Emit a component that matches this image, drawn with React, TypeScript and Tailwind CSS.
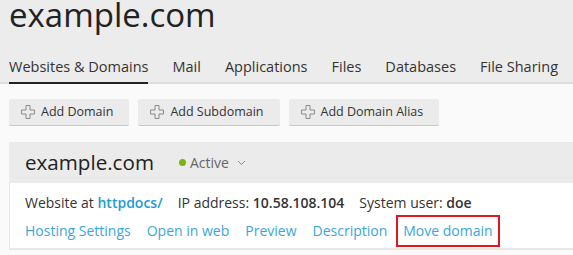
import { useState } from 'react';

const tabs = ['Websites & Domains', 'Mail', 'Applications', 'Files', 'Databases', 'File Sharing'];
const actions = ['Add Domain', 'Add Subdomain', 'Add Domain Alias'];
const links = ['Hosting Settings', 'Open in web', 'Preview', 'Description'];

function PlusIcon() {
  return (
    <svg className="w-[14px] h-[14px] shrink-0" viewBox="0 0 14 14" fill="none" stroke="#8a8a8a" strokeWidth={1}>
      <path d="M5 0.5h4v4.5h4.5v4h-4.5v4.5h-4v-4.5h-4.5v-4h4.5z" />
    </svg>
  );
}

export default function App() {
  const [activeTab] = useState(0);

  return (
    <div className="w-[573px] h-[255px] overflow-hidden bg-[#fafafa] font-['Open_Sans',sans-serif] text-[#333]">
      {/* Page header */}
      <div className="bg-[#ececec] border-b-2 border-[#dedede] pt-[1px]">
        <h1 className="px-[9px] text-[33px] leading-[44px] -mt-[8px] text-[#222] whitespace-nowrap">example.com</h1>
        <div className="flex gap-[24px] px-[9px] mt-[19px] text-[14.5px] text-[#333]">
          {tabs.map((t, i) => (
            <div
              key={t}
              className={
                'whitespace-nowrap pb-[4px] leading-[22px] -mb-[2px] ' +
                (i === activeTab ? 'border-b-2 border-[#222]' : 'border-b-2 border-transparent')
              }
            >
              {t}
            </div>
          ))}
        </div>
      </div>

      {/* Toolbar */}
      <div className="flex gap-[9px] px-[9px] pt-[15px]">
        {actions.map((a) => (
          <button
            key={a}
            className="flex items-center gap-[6px] h-[27px] pl-[12px] pr-[16px] bg-[#ebebeb] border-b border-[#c9c9c9] rounded-[2px] text-[12.5px] text-[#333]"
          >
            <PlusIcon />
            {a}
          </button>
        ))}
      </div>

      {/* Domain card */}
      <div className="ml-[9px] mt-[16px]">
        <div className="flex items-center h-[41px] bg-[#ebebeb] pl-[16px]">
          <span className="text-[20.6px] text-[#222]">example.com</span>
          <span className="flex items-center ml-[25px] text-[14px] text-[#666]">
            <span className="w-[7px] h-[7px] rounded-full bg-[#7ab317] mr-[4px]" />
            Active
            <svg className="w-[9px] h-[9px] ml-[8px]" viewBox="0 0 9 9" fill="none" stroke="#888" strokeWidth={1}>
              <path d="M1 3l3.5 3.5L8 3" />
            </svg>
          </span>
        </div>
        <div className="bg-white border-l border-b-2 border-[#e8e8e8] pl-[15px] pt-[9px] pb-[1px] text-[14px]">
          <div className="flex gap-[15px] leading-[22px]">
            <span>
              Website at <a className="font-semibold text-[#1e9ad6]">httpdocs/</a>
            </span>
            <span>
              IP address: <span className="font-semibold">10.58.108.104</span>
            </span>
            <span>
              System user: <span className="font-semibold">doe</span>
            </span>
          </div>
          <div className="flex items-center gap-[16px] mt-[1px] text-[#3aa6dc]">
            {links.map((l) => (
              <a key={l} className="leading-[32px]">
                {l}
              </a>
            ))}
            <a className="leading-[28px] border-2 border-[#e8141c] px-[5px] -ml-[7px]">Move domain</a>
          </div>
        </div>
      </div>
    </div>
  );
}
